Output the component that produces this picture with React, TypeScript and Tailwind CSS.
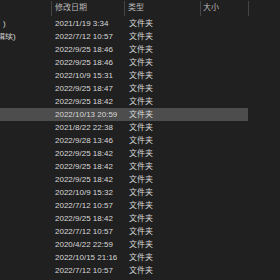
import React from "react";

const rows: { name: string; date: string }[] = [
  { name: ")", date: "2021/1/19 3:34" },
  { name: "辑续)", date: "2022/7/12 10:57" },
  { name: "", date: "2022/9/25 18:46" },
  { name: "", date: "2022/9/25 18:46" },
  { name: "", date: "2022/10/9 15:31" },
  { name: "", date: "2022/9/25 18:47" },
  { name: "", date: "2022/9/25 18:42" },
  { name: "", date: "2022/10/13 20:59" },
  { name: "", date: "2021/8/22 22:38" },
  { name: "", date: "2022/9/28 13:46" },
  { name: "", date: "2022/9/25 18:42" },
  { name: "", date: "2022/9/25 18:42" },
  { name: "", date: "2022/9/25 18:42" },
  { name: "", date: "2022/10/9 15:32" },
  { name: "", date: "2022/7/12 10:57" },
  { name: "", date: "2022/9/25 18:42" },
  { name: "", date: "2022/7/12 10:57" },
  { name: "", date: "2020/4/22 22:59" },
  { name: "", date: "2022/10/15 21:16" },
  { name: "", date: "2022/7/12 10:57" },
];

const font = { fontFamily: '"Liberation Sans", "Noto Sans CJK SC", sans-serif' };

export default function App() {
  return (
    <div
      className="w-[280px] h-[280px] bg-[#202020] overflow-hidden text-[8px] leading-none"
      style={font}
    >
      <div className="flex h-[17px] items-stretch text-[#b8b8b8]">
        <div className="w-[51px] shrink-0" />
        <div className="w-[73px] shrink-0 border-l border-[#454545] flex items-center pl-[3px] pb-[1px] mt-[1px] mb-[1px]">
          修改日期
        </div>
        <div className="w-[76px] shrink-0 border-l border-[#454545] flex items-center pl-[3px] pb-[1px] mt-[1px] mb-[1px]">
          类型
        </div>
        <div className="w-[49px] shrink-0 border-l border-[#454545] border-r flex items-center pl-[2px] pb-[1px] mt-[1px] mb-[1px]">
          大小
        </div>
      </div>
      <div className="flex flex-col">
        {rows.map((r, i) => (
          <div
            key={i}
            className={
              "flex h-[13px] items-center w-[248px] text-[#d8d8d8] " +
              (i === 7 ? "bg-[#4d4d4d]" : "")
            }
          >
            <div className="w-[52px] shrink-0 overflow-hidden whitespace-nowrap">
              <span className={i === 1 ? "ml-[-3px] inline-block" : "ml-[3px] inline-block"}>
                {r.name}
              </span>
            </div>
            <div className="w-[73px] shrink-0 pl-[3px] whitespace-nowrap">{r.date}</div>
            <div className="w-[75px] shrink-0 pl-[4px] whitespace-nowrap">文件夹</div>
          </div>
        ))}
      </div>
    </div>
  );
}
